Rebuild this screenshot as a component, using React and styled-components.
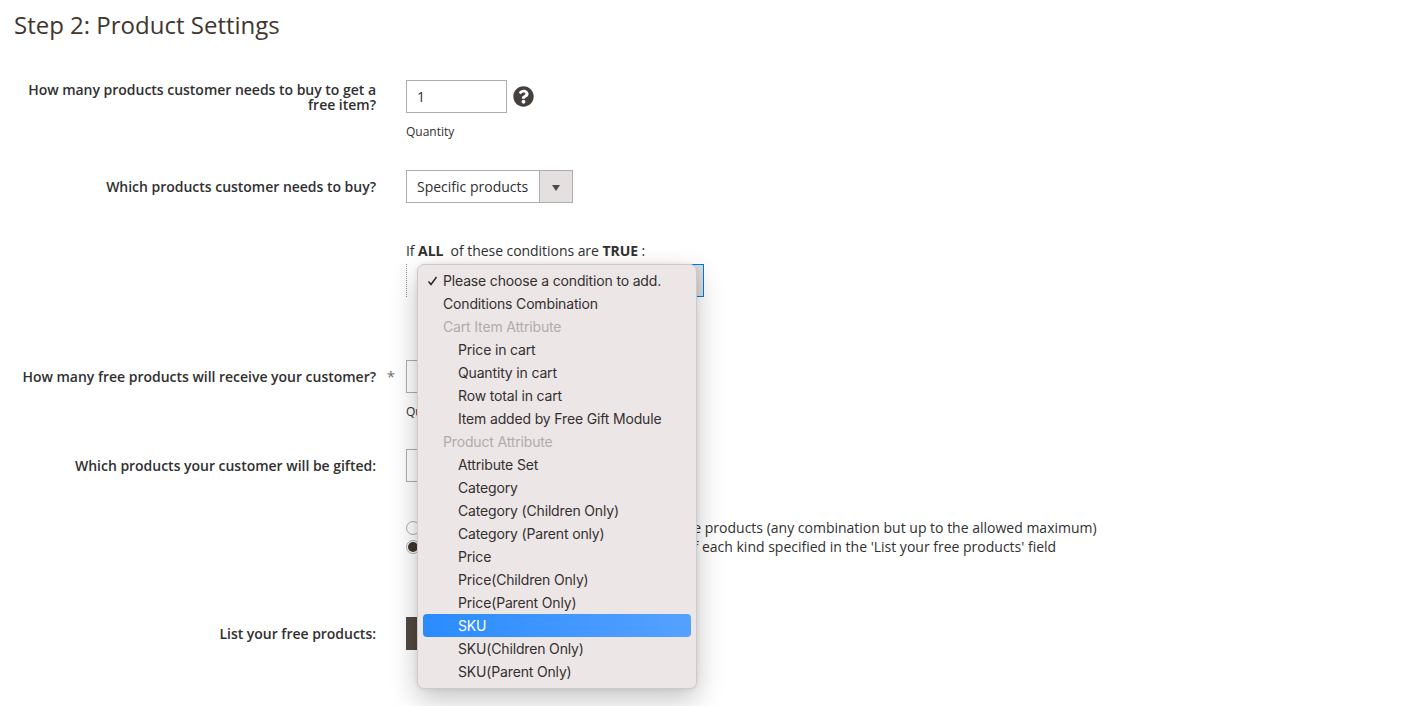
import React from "react";
import styled, { createGlobalStyle } from "styled-components";
import { FaQuestionCircle } from "react-icons/fa";

const Global = createGlobalStyle`
  html, body { margin: 0; padding: 0; background: #fff; height: 706px; overflow: hidden; }
  body { font-family: "Open Sans", sans-serif; color: #303030; }
`;

const Page = styled.main`
  padding: 8px 0 0 14px;
  width: 1414px;
  box-sizing: border-box;
`;

const Title = styled.h1`
  margin: 0 0 39px;
  font-size: 24px;
  line-height: 33px;
  font-weight: 400;
  color: #41362f;
`;

const Row = styled.section`
  display: grid;
  grid-template-columns: 362px 1fr;
  column-gap: 30px;
  align-items: start;
  margin-bottom: ${(p) => p.$gap || 0}px;
`;

const Label = styled.label`
  position: relative;
  min-height: 33px;
  display: flex;
  align-items: center;
  justify-content: flex-end;
  text-align: right;
  font-size: 14px;
  line-height: 15px;
  font-weight: 600;
  letter-spacing: -0.02px;
  color: #303030;
`;

const Required = styled.span`
  position: absolute;
  right: -19px;
  top: 9px;
  font-size: 15px;
  line-height: 15px;
  font-weight: 400;
  color: #6f6f6f;
`;

const Control = styled.div`
  display: flex;
  align-items: center;
  gap: 6px;
`;

const TextInput = styled.div`
  width: 101px;
  height: 33px;
  box-sizing: border-box;
  border: 1px solid #adadad;
  background: #fff;
  padding-left: 10px;
  font-size: 14px;
  line-height: 31px;
  color: #303030;
`;

const Help = styled.span`
  display: flex;
  color: #45403c;
`;

const Note = styled.div`
  margin-top: 11px;
  font-size: 12px;
  line-height: 16px;
  color: #303030;
`;

const Select = styled.div`
  width: ${(p) => p.$width}px;
  height: 33px;
  box-sizing: border-box;
  border: 1px solid #adadad;
  background: #fff;
  display: flex;
  font-size: 14px;
  line-height: 31px;
  color: #303030;
`;

const SelectText = styled.span`
  flex: 1;
  padding-left: 10px;
  white-space: nowrap;
`;

const SelectArrow = styled.span`
  width: 33px;
  flex: none;
  box-sizing: border-box;
  border-left: 1px solid #adadad;
  background: #e3e0df;
  display: flex;
  align-items: center;
  justify-content: center;
  &::after {
    content: "";
    margin-top: 2px;
    border-left: 4px solid transparent;
    border-right: 4px solid transparent;
    border-top: 6px solid #514943;
  }
`;

const Conditions = styled.div`
  margin: 0 0 63px 392px;
`;

const ConditionText = styled.p`
  margin: 0 0 4px;
  font-size: 14px;
  line-height: 19px;
  letter-spacing: -0.05px;
  color: #303030;
  white-space: pre;
  b { font-weight: 700; }
`;

const Picker = styled.div`
  position: relative;
  width: 298px;
  height: 33px;
  box-sizing: border-box;
  border-left: 1px dotted #8a8a8a;
  display: flex;
  justify-content: flex-end;
`;

const PickerEnd = styled.span`
  width: 40px;
  box-sizing: border-box;
  border: 1px solid #007bdb;
  background: #dcdcdc;
`;

const Menu = styled.ul`
  position: absolute;
  z-index: 5;
  top: 0;
  left: 10px;
  width: 280px;
  height: 425px;
  box-sizing: border-box;
  margin: 0;
  padding: 4px 5px;
  list-style: none;
  background: #ede6e6;
  border: 1px solid #cfc9c9;
  border-radius: 7px;
  box-shadow: 0 10px 28px rgba(0, 0, 0, 0.24), 0 0 4px rgba(0, 0, 0, 0.08);
  font-family: Inter, sans-serif;
  font-size: 14px;
`;

const Item = styled.li`
  position: relative;
  height: 23px;
  line-height: 23px;
  padding-left: ${(p) => (p.$nested ? 35 : 20)}px;
  border-radius: 4px;
  white-space: nowrap;
  letter-spacing: -0.16px;
  color: ${(p) => (p.$group ? "#b0acac" : p.$active ? "#fff" : "#333030")};
  background: ${(p) => (p.$active ? "linear-gradient(90deg, #2a8bff, #55a1ff)" : "none")};
`;

const Check = styled.svg`
  position: absolute;
  left: 4px;
  top: 7px;
`;

const Options = styled.div`
  margin: 36px 0 61px 392px;
  display: flex;
  flex-direction: column;
`;

const Option = styled.div`
  display: flex;
  align-items: center;
  gap: ${(p) => p.$gap}px;
  height: 19px;
  font-size: 14px;
  color: #303030;
  white-space: nowrap;
`;

const Radio = styled.span`
  width: 14px;
  height: 14px;
  flex: none;
  box-sizing: border-box;
  border: 1px solid #adadad;
  border-radius: 50%;
  background: #fff;
  display: flex;
  align-items: center;
  justify-content: center;
  &::after {
    content: "";
    width: 10px;
    height: 10px;
    border-radius: 50%;
    background: ${(p) => (p.$checked ? "#41362f" : "transparent")};
  }
`;

const Dark = styled.button`
  width: 200px;
  height: 33px;
  border: 0;
  background: #514943;
  color: #fff;
  font: 600 14px "Open Sans", sans-serif;
`;

const items = [
  { t: "Please choose a condition to add.", checked: true },
  { t: "Conditions Combination" },
  { t: "Cart Item Attribute", group: true },
  { t: "Price in cart", nested: true },
  { t: "Quantity in cart", nested: true },
  { t: "Row total in cart", nested: true },
  { t: "Item added by Free Gift Module", nested: true },
  { t: "Product Attribute", group: true },
  { t: "Attribute Set", nested: true },
  { t: "Category", nested: true },
  { t: "Category (Children Only)", nested: true },
  { t: "Category (Parent only)", nested: true },
  { t: "Price", nested: true },
  { t: "Price(Children Only)", nested: true },
  { t: "Price(Parent Only)", nested: true },
  { t: "SKU", nested: true, active: true },
  { t: "SKU(Children Only)", nested: true },
  { t: "SKU(Parent Only)", nested: true },
];

export default function App() {
  return (
    <Page>
      <Global />
      <Title>Step 2: Product Settings</Title>

      <Row $gap={30}>
        <Label>How many products customer needs to buy to get a free item?</Label>
        <div>
          <Control>
            <TextInput>1</TextInput>
            <Help><FaQuestionCircle size={21} /></Help>
          </Control>
          <Note>Quantity</Note>
        </div>
      </Row>

      <Row $gap={38}>
        <Label>Which products customer needs to buy?</Label>
        <Select $width={167}>
          <SelectText>Specific products</SelectText>
          <SelectArrow />
        </Select>
      </Row>

      <Conditions>
        <ConditionText>If <b>ALL</b>  of these conditions are <b>TRUE</b> :</ConditionText>
        <Picker>
          <PickerEnd />
          <Menu>
            {items.map((i) => (
              <Item key={i.t} $nested={i.nested} $group={i.group} $active={i.active}>
                {i.checked && (
                  <Check width="11" height="10" viewBox="0 0 11 10" fill="none">
                    <path d="M1.5 5.5 L4 8.5 L9.5 1" stroke="#2a2626" strokeWidth="1.5" />
                  </Check>
                )}
                {i.t}
              </Item>
            ))}
          </Menu>
        </Picker>
      </Conditions>

      <Row $gap={29}>
        <Label>
          How many free products will receive your customer?
          <Required>*</Required>
        </Label>
        <div>
          <TextInput />
          <Note>Quantity</Note>
        </div>
      </Row>

      <Row>
        <Label>Which products your customer will be gifted:</Label>
        <Select $width={200}>
          <SelectText>Free products</SelectText>
          <SelectArrow />
        </Select>
      </Row>

      <Options>
        <Option $gap={6}>
          <Radio />
          Customer can choose from any of the free products (any combination but up to the allowed maximum)
        </Option>
        <Option $gap={15}>
          <Radio $checked />
          Customer receives the whole quantity of each kind specified in the 'List your free products' field
        </Option>
      </Options>

      <Row>
        <Label>List your free products:</Label>
        <Dark>Add products</Dark>
      </Row>
    </Page>
  );
}
